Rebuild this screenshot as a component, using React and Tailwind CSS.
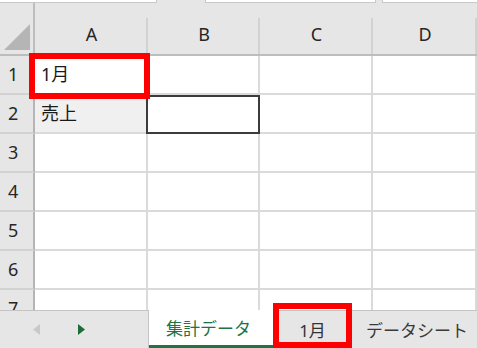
import React from "react";

const cols = ["A", "B", "C", "D"];
const rows = [1, 2, 3, 4, 5, 6, 7];
const font = { fontFamily: '"Noto Sans", "Noto Sans CJK JP", sans-serif' };

const cellText = {
  "1-A": "1月",
  "2-A": "売上",
};

export default function App() {
  return (
    <div className="w-[477px] h-[348px] overflow-hidden bg-[#e6e6e6] flex flex-col" style={font}>
      {/* formula bar remnants */}
      <div className="h-[3px] flex shrink-0">
        <div className="w-[157px] bg-white border-b border-r border-[#c8c8c8]" />
        <div className="w-[48px]" />
        <div className="w-[171px] bg-white border-b border-l border-r border-[#c8c8c8]" />
        <div className="w-[6px]" />
        <div className="flex-1 bg-white border-b border-l border-[#c8c8c8]" />
      </div>

      {/* grid */}
      <div className="relative h-[307px] overflow-hidden shrink-0">
        <div className="grid grid-cols-[35px_113px_112px_113px_1fr]">
          {/* corner */}
          <div className="h-[53px] border-r-2 border-b-2 border-[#bdbdbd] flex items-end justify-end pr-[3px] pb-[4px]">
            <svg width="26" height="26" viewBox="0 0 26 26">
              <polygon points="26,0 26,26 0,26" fill="#b5b5b5" />
            </svg>
          </div>
          {cols.map((c) => (
            <div
              key={c}
              className="h-[53px] border-b-2 border-[#bdbdbd] flex items-center justify-center pt-[12px] text-[18px] text-[#262626] relative after:absolute after:right-0 after:top-[15px] after:bottom-0 after:w-[2px] after:bg-[#d2d2d2]"
            >
              {c}
            </div>
          ))}

          {rows.map((r) => (
            <React.Fragment key={r}>
              <div className="h-[39px] border-r-2 border-b-2 border-r-[#b5b5b5] border-b-[#d2d2d2] flex items-center pl-[8px] text-[18px] text-[#262626]">
                {r}
              </div>
              {cols.map((c) => {
                const isB2 = r === 2 && c === "B";
                return (
                  <div
                    key={c}
                    className={`h-[39px] border-r-2 border-b-2 border-[#dadada] flex items-center pl-[6px] text-[18px] text-[#1a1a1a] ${
                      r === 2 && c === "A" ? "bg-[#f0f0f0]" : "bg-white"
                    } ${isB2 ? "!border-[#3c3c3c] border-l-2 border-t-2 -ml-[2px] w-[calc(100%+2px)]" : ""}`}
                  >
                    {cellText[`${r}-${c}`]}
                  </div>
                );
              })}
            </React.Fragment>
          ))}
        </div>

        {/* red highlight on A1 */}
        <div className="absolute left-[29px] top-[50px] w-[121px] h-[46px] border-[6px] border-[#ff0000]" />
      </div>

      {/* sheet tabs */}
      <div className="h-[38px] flex shrink-0 relative">
        <div className="w-[148px] border-t border-[#c4c4c4] flex items-center">
          <svg className="ml-[33px]" width="7" height="11" viewBox="0 0 7 11">
            <polygon points="7,0 7,11 0,5.5" fill="#c8c8c8" />
          </svg>
          <svg className="ml-[38px]" width="7" height="11" viewBox="0 0 7 11">
            <polygon points="0,0 0,11 7,5.5" fill="#1e6b3c" />
          </svg>
        </div>
        <div className="w-[125px] bg-white border-l border-[#c4c4c4] flex flex-col">
          <div className="flex-1 flex items-center pl-[17px] pt-[2px] text-[17px] text-[#217346]">集計データ</div>
          <div className="h-[3px] bg-[#217346]" />
        </div>
        <div className="w-[79px] border-t border-[#c4c4c4] flex items-center justify-center pt-[2px] text-[17px] text-[#333333]">
          1月
        </div>
        <div className="flex-1 border-t border-[#c4c4c4] flex items-center pl-[14px] pt-[2px] text-[17px] text-[#3a3a3a]">
          データシート
        </div>
        {/* red highlight on tab */}
        <div className="absolute left-[273px] top-[-7px] w-[79px] h-[45px] border-[6px] border-[#ff0000]" />
      </div>
    </div>
  );
}
